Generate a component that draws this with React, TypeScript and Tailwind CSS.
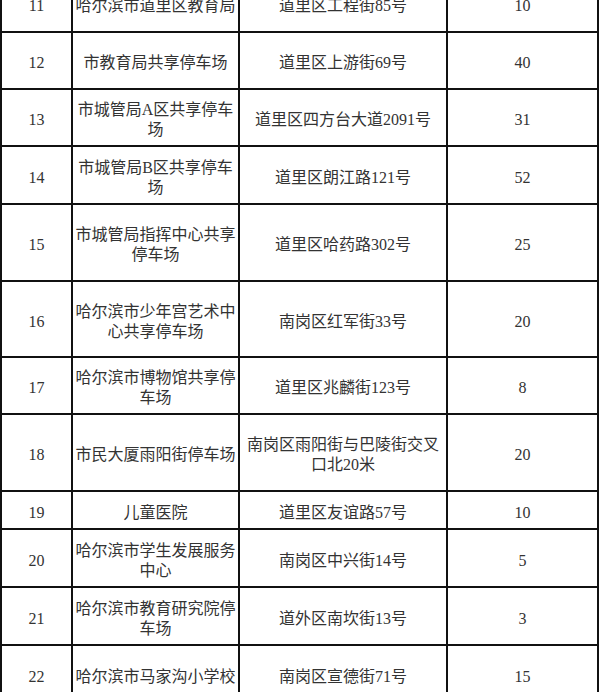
import React from "react";

type Row = { no: string; name: string; addr: string; count: string; h: string };

const rows: Row[] = [
    { no: "11", name: "哈尔滨市道里区教育局", addr: "道里区工程街85号", count: "10", h: "h-[57px]" },
    { no: "12", name: "市教育局共享停车场", addr: "道里区上游街69号", count: "40", h: "h-[57px]" },
    { no: "13", name: "市城管局A区共享停车场", addr: "道里区四方台大道2091号", count: "31", h: "h-[57px]" },
    { no: "14", name: "市城管局B区共享停车场", addr: "道里区朗江路121号", count: "52", h: "h-[58px]" },
    { no: "15", name: "市城管局指挥中心共享停车场", addr: "道里区哈药路302号", count: "25", h: "h-[77px]" },
    { no: "16", name: "哈尔滨市少年宫艺术中心共享停车场", addr: "南岗区红军街33号", count: "20", h: "h-[76px]" },
    { no: "17", name: "哈尔滨市博物馆共享停车场", addr: "道里区兆麟街123号", count: "8", h: "h-[57px]" },
    { no: "18", name: "市民大厦雨阳街停车场", addr: "南岗区雨阳街与巴陵街交叉口北20米", count: "20", h: "h-[77px]" },
    { no: "19", name: "儿童医院", addr: "道里区友谊路57号", count: "10", h: "h-[38px]" },
    { no: "20", name: "哈尔滨市学生发展服务中心", addr: "南岗区中兴街14号", count: "5", h: "h-[58px]" },
    { no: "21", name: "哈尔滨市教育研究院停车场", addr: "道外区南坎街13号", count: "3", h: "h-[58px]" },
    { no: "22", name: "哈尔滨市马家沟小学校", addr: "南岗区宣德街71号", count: "15", h: "h-[58px]" },
];

const cell = "flex items-center justify-center text-center border-r-2 border-[#111] px-[1px] pt-[5px]";

export default function App() {
    return (
        <div className="w-[600px] h-[692px] overflow-hidden bg-white">
            <div className="-mt-[24px] w-[599px] border-l-2 border-[#111] text-[16px] leading-[20px] text-[#333] font-['Liberation_Serif','Noto_Sans_CJK_SC',serif]">
                {rows.map((r) => (
                    <div key={r.no} className={`flex border-b-2 border-[#111] ${r.h}`}>
                        <div className={`${cell} w-[71px]`}>{r.no}</div>
                        <div className={`${cell} w-[167px]`}>{r.name}</div>
                        <div className={`${cell} w-[208px]`}>{r.addr}</div>
                        <div className={`${cell} w-[151px]`}>{r.count}</div>
                    </div>
                ))}
            </div>
        </div>
    );
}
